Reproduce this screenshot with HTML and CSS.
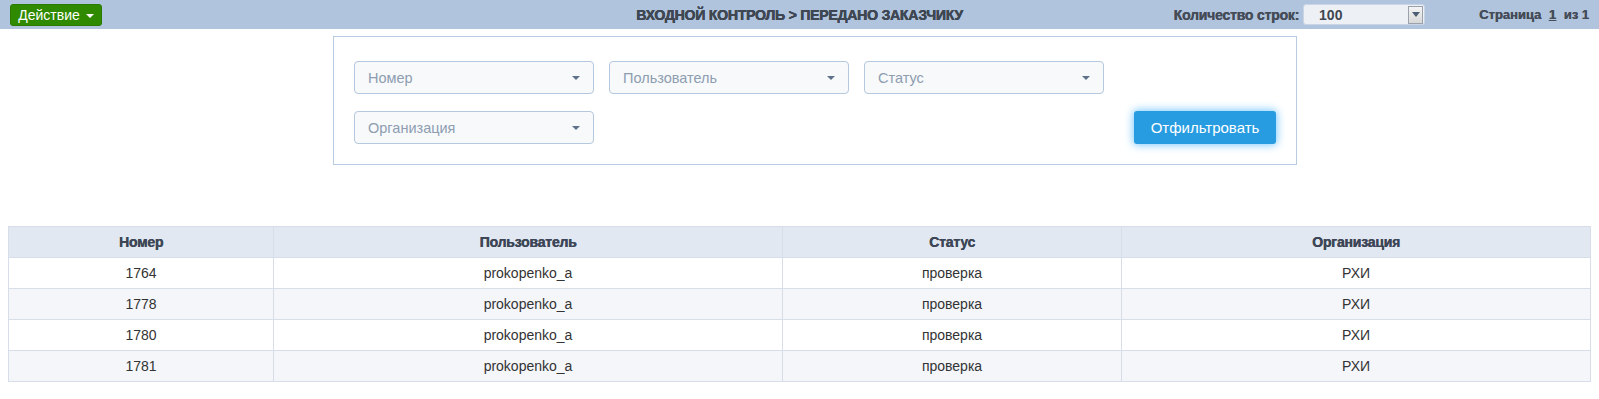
FILE: index.html
```html
<!DOCTYPE html>
<html lang="ru">
<head>
<meta charset="utf-8">
<title>Входной контроль</title>
<link rel="stylesheet" href="styles.css">
</head>
<body>
<header class="topbar">
  <div class="bar-left">
    <button class="action-btn">Действие <span class="caret-white"></span></button>
  </div>
  <div class="bar-title">ВХОДНОЙ КОНТРОЛЬ &gt; ПЕРЕДАНО ЗАКАЗЧИКУ</div>
  <div class="bar-right">
    <span class="rows-label">Количество строк:</span>
    <div class="rows-select">
      <span class="rows-value">100</span>
      <span class="rows-arrow"><span class="tri-dark"></span></span>
    </div>
    <span class="pager">Страница <u class="pager-num">1</u> из 1</span>
  </div>
</header>

<section class="filter-box">
  <div class="filter-row">
    <div class="sel"><span class="sel-ph">Номер</span><span class="sel-caret"></span></div>
    <div class="sel"><span class="sel-ph">Пользователь</span><span class="sel-caret"></span></div>
    <div class="sel"><span class="sel-ph">Статус</span><span class="sel-caret"></span></div>
  </div>
  <div class="filter-row filter-row-2">
    <div class="sel"><span class="sel-ph">Организация</span><span class="sel-caret"></span></div>
    <button class="filter-btn">Отфильтровать</button>
  </div>
</section>

<table class="grid">
  <colgroup>
    <col class="c1"><col class="c2"><col class="c3"><col class="c4">
  </colgroup>
  <thead>
    <tr><th>Номер</th><th>Пользователь</th><th>Статус</th><th>Организация</th></tr>
  </thead>
  <tbody>
    <tr><td>1764</td><td>prokopenko_a</td><td>проверка</td><td>РХИ</td></tr>
    <tr><td>1778</td><td>prokopenko_a</td><td>проверка</td><td>РХИ</td></tr>
    <tr><td>1780</td><td>prokopenko_a</td><td>проверка</td><td>РХИ</td></tr>
    <tr><td>1781</td><td>prokopenko_a</td><td>проверка</td><td>РХИ</td></tr>
  </tbody>
</table>
</body>
</html>
```

FILE: styles.css
```css
* { box-sizing: border-box; }
html, body { margin: 0; padding: 0; background: #fff; }
body {
  font-family: "Liberation Sans", Arial, sans-serif;
  font-size: 14px;
  color: #333;
}

.topbar {
  height: 29px;
  background: #b0c4de;
  display: grid;
  grid-template-columns: 1fr auto 1fr;
  align-items: center;
  padding: 0 10px 0 10px;
}
.bar-left { display: flex; align-items: center; }
.action-btn {
  height: 22px;
  width: 92px;
  margin-top: 1px;
  background: #2f8a00;
  border: 1px solid #2a7a00;
  border-radius: 3px;
  color: #fff;
  font-family: "Liberation Sans", Arial, sans-serif;
  font-size: 14px;
  padding: 0;
  display: flex;
  align-items: center;
  justify-content: center;
  gap: 6px;
}
.caret-white {
  width: 0; height: 0;
  border-left: 4px solid transparent;
  border-right: 4px solid transparent;
  border-top: 4px solid #fff;
  margin-top: 1px;
}
.bar-title {
  font-weight: bold;
  font-size: 14px;
  color: #3f4752;
  text-shadow: 0.4px 0 0 #3f4752, 0 0 0.6px #3f4752;
  letter-spacing: -0.2px;
}
.bar-right {
  display: flex;
  align-items: center;
  justify-content: flex-end;
  font-weight: bold;
  font-size: 14px;
  color: #454c57;
}
.rows-label { text-shadow: 0.3px 0 0 #454c57; letter-spacing: -0.2px; }
.rows-select {
  margin-left: 4px;
  width: 122px;
  height: 21px;
  background: #edf1f6;
  border: 1px solid #c9d5e4;
  border-radius: 3px;
  display: flex;
  align-items: center;
  justify-content: space-between;
  padding: 0 1px 0 15px;
}
.rows-value { color: #3f4650; font-size: 14px; }
.rows-arrow {
  width: 15px;
  height: 18px;
  background: linear-gradient(#f4f4f4, #d8d8d8);
  border: 1px solid #9aa3ad;
  display: flex;
  align-items: center;
  justify-content: center;
}
.tri-dark {
  width: 0; height: 0;
  border-left: 4px solid transparent;
  border-right: 4px solid transparent;
  border-top: 5px solid #4d5d72;
}
.pager { margin-left: 54px; font-size: 13px; text-shadow: 0.3px 0 0 #454c57; }
.pager-num { margin: 0 4px; }

.filter-box {
  margin: 7px 0 0 333px;
  width: 964px;
  border: 1px solid #b9cbe0;
  padding: 24px 20px 20px 20px;
  display: flex;
  flex-direction: column;
  gap: 17px;
}
.filter-row { display: flex; gap: 15px; align-items: center; }
.filter-row-2 { justify-content: space-between; }
.sel {
  width: 240px;
  height: 33px;
  background: #f7f9fb;
  border: 1px solid #b4c8de;
  border-radius: 4px;
  display: flex;
  align-items: center;
  justify-content: space-between;
  padding: 0 13px 0 13px;
}
.sel-ph { color: #8e9db0; font-size: 14.5px; }
.sel-caret {
  width: 0; height: 0;
  border-left: 4px solid transparent;
  border-right: 4px solid transparent;
  border-top: 4px solid #5f7289;
}
.filter-btn {
  width: 142px;
  height: 33px;
  background: #279ce0;
  border: none;
  border-radius: 3px;
  color: #fff;
  font-family: "Liberation Sans", Arial, sans-serif;
  font-size: 15px;
  box-shadow: 0 0 8px 1px #7cc9ff;
}

.grid {
  margin: 61px 8px 0 8px;
  width: calc(100% - 16px);
  border-collapse: collapse;
  table-layout: fixed;
}
.c1 { width: 265px; }
.c2 { width: 509px; }
.c3 { width: 339px; }
.c4 { width: auto; }
.grid th, .grid td {
  border: 1px solid #d7dee9;
  text-align: center;
  height: 31px;
  padding: 0 6px;
}
.grid th {
  background: #e1e8f1;
  font-weight: bold;
  font-size: 14px;
  color: #3d4656;
  text-shadow: 0.4px 0 0 #3d4656;
  letter-spacing: -0.2px;
}
.grid td { font-size: 14px; color: #333; }
.grid tbody tr:nth-child(even) td { background: #f4f6fa; }
```
